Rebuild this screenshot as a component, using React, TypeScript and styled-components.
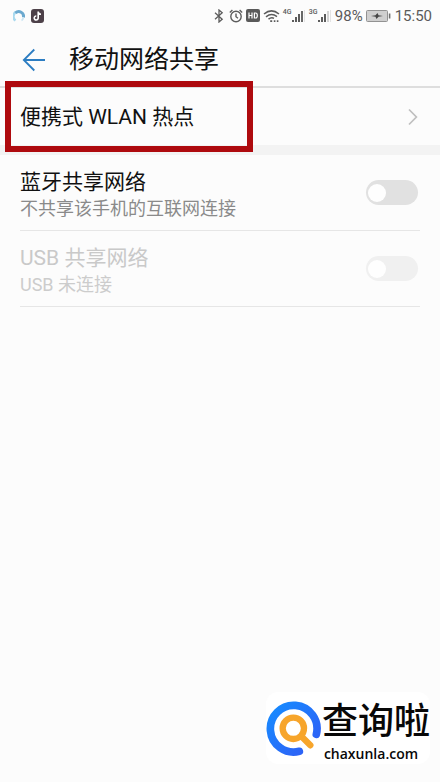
import React from 'react';
import styled, { createGlobalStyle } from 'styled-components';

const GlobalStyle = createGlobalStyle`
  *, *::before, *::after { box-sizing: border-box; }
  body {
    margin: 0;
    background: #fcfcfc;
    color: #111;
    font-family: Roboto, "Noto Sans CJK SC", sans-serif;
  }
`;

const Page = styled.div`
  position: relative;
  display: flex;
  flex-direction: column;
  min-height: 100vh;
`;

const StatusBar = styled.div`
  display: flex;
  align-items: center;
  justify-content: space-between;
  height: 31px;
  padding: 0 8px 0 13px;
  color: #5a5a5a;
  font-size: 15px;
  line-height: 20px;
`;

const StatusGroup = styled.div<{ $gap: number }>`
  display: flex;
  align-items: center;
  gap: ${(p) => p.$gap}px;

  svg { display: block; flex: none; }
`;

const Header = styled.header`
  display: flex;
  align-items: center;
  gap: 24px;
  height: 57px;
  padding: 2px 22px 0;
  border-bottom: 2px solid #dedede;
`;

const BackButton = styled.button`
  display: flex;
  padding: 0;
  border: 0;
  background: none;
  cursor: pointer;
`;

const Title = styled.h1`
  margin: 0;
  font-size: 25px;
  font-weight: 400;
  line-height: 36px;
`;

const EntryRow = styled.a`
  position: relative;
  display: flex;
  align-items: center;
  justify-content: space-between;
  height: 57px;
  padding: 0 22px 0 20px;
  color: inherit;
  text-decoration: none;
`;

const Highlight = styled.span`
  position: absolute;
  top: -7px;
  left: 5px;
  width: 248px;
  height: 71px;
  border: 6px solid #ae0a0e;
  pointer-events: none;
`;

const SectionBand = styled.div`
  height: 10px;
  background: #f3f3f3;
`;

const SettingList = styled.div`
  display: flex;
  flex-direction: column;
  padding: 0 20px;
`;

const SettingRow = styled.label<{ $muted?: boolean }>`
  display: flex;
  align-items: center;
  justify-content: space-between;
  height: 76px;
  padding-right: 2px;
  border-bottom: 1px solid #e6e6e6;
  color: ${(p) => (p.$muted ? '#c9c9c9' : '#111')};
  --sub: ${(p) => (p.$muted ? '#cccccc' : '#8a8a8a')};
`;

const Labels = styled.span`
  display: flex;
  flex-direction: column;
  padding-top: 3px;
`;

const RowTitle = styled.span`
  font-size: 21px;
  line-height: 28px;
`;

const RowSubtitle = styled.span`
  color: var(--sub);
  font-size: 18px;
  line-height: 25px;
`;

const Toggle = styled.input`
  appearance: none;
  display: flex;
  align-items: center;
  flex: none;
  width: 52px;
  height: 25px;
  margin: 0;
  padding: 0 2px;
  border-radius: 13px;
  background: #e1e1e1;

  &::before {
    content: "";
    width: 18px;
    height: 18px;
    border-radius: 50%;
    background: #fefefe;
  }

  &:checked {
    justify-content: flex-end;
    background: #2b7cc4;
  }

  &:disabled { background: #f0f0f0; }
`;

const Watermark = styled.div`
  position: absolute;
  right: 10px;
  bottom: 18px;
  display: flex;
  align-items: center;
  gap: 1px;
  border-radius: 12px;
  background: #fff;
  color: #080808;
`;

const WatermarkText = styled.div`
  display: flex;
  flex-direction: column;
  align-items: center;
`;

const BrandName = styled.span`
  font-family: "Noto Sans CJK SC", sans-serif;
  font-size: 36px;
  font-weight: 500;
  line-height: 52px;
`;

const BrandSite = styled.span`
  padding-right: 10px;
  font-family: "Open Sans", "Noto Sans", sans-serif;
  font-size: 14px;
  font-weight: 600;
  line-height: 20px;
`;

const SwirlIcon = () => (
  <svg width="12" height="14" viewBox="0 0 12 14" fill="none">
    <path d="M2.5 11.5A5 5 0 0 1 3 3" stroke="#a9d9ee" strokeWidth="2.6" />
    <path d="M2.5 4A4.7 4.7 0 0 1 10.4 8.4" stroke="#6ba9cf" strokeWidth="3" />
    <path d="M10.4 8.2Q10 11 8.5 11.5" stroke="#cbe6f3" strokeWidth="1.8" />
  </svg>
);

const NoteIcon = () => (
  <svg width="13" height="14" viewBox="0 0 13 14" fill="none">
    <rect width="13" height="14" rx="3" fill="#4d4149" />
    <path d="M7.2 2.5V9A2 2 0 1 1 5.3 7M7.2 2.8Q7.7 5.2 10 5.3" stroke="#fff" strokeWidth="1.6" />
  </svg>
);

const BluetoothIcon = () => (
  <svg width="12" height="14" viewBox="0 0 12 14" fill="none" stroke="#5c5c5c" strokeWidth="1.3">
    <path d="M1 3.8L8.2 10.2L5 13V1L8.2 3.8L1 10.2" />
  </svg>
);

const AlarmIcon = () => (
  <svg width="14" height="14" viewBox="0 0 14 14" fill="none" stroke="#5c5c5c" strokeWidth="1.4">
    <circle cx="7" cy="7.5" r="5.2" />
    <path d="M7 4.5V7.7L9 9.2M.8 3.4L3.4 1.1M13.2 3.4L10.6 1.1" />
  </svg>
);

const HdIcon = () => (
  <svg width="14" height="13" viewBox="0 0 14 13" fill="none">
    <rect width="14" height="13" rx="2" fill="#5a5a5a" />
    <path d="M3 3.5V9.5M6 3.5V9.5M3 6.5H6M8.4 4H9.6Q11.3 4 11.3 6.5T9.6 9H8.4Z" stroke="#fff" strokeWidth="1.2" />
  </svg>
);

const WifiIcon = () => (
  <svg width="17" height="14" viewBox="0 0 17 14" fill="none" stroke="#5c5c5c" strokeWidth="1.5">
    <path d="M1 5Q8.5 -1.3 16 5M3 7.8Q8.5 3.5 14 7.6M5.5 10.2Q8.5 7.7 11 9.4" />
    <path d="M7.2 12.2H9.2M10.8 12.2H12.4M13.8 12.2H15.4" strokeWidth="1.8" />
  </svg>
);

const Signal = styled.span`
  display: flex;
  align-items: flex-start;
  height: 14px;
`;

const Network = styled.span`
  width: 9px;
  font-size: 7px;
  font-weight: 500;
  line-height: 7px;
`;

const SignalBars = ({ weak }: { weak?: boolean }) => (
  <svg width="14" height="14" viewBox="0 0 14 14">
    <path d="M0 11H2V13H0ZM3 8H5V13H3ZM6 5H8V13H6Z" fill="#5c5c5c" />
    <path d="M9 2H11V13H9Z" fill={weak ? '#d3d3d3' : '#686868'} />
    <path d="M12.2 1H13V13H12.2Z" fill="#ddd" />
  </svg>
);

const BatteryIcon = () => (
  <svg width="26" height="14" viewBox="0 0 26 14" fill="none">
    <rect x=".5" y="1.5" width="21" height="11" rx="1" fill="#cfcfcf" stroke="#929292" />
    <path d="M22.8 4.5H24.4V9.5H22.8Z" fill="#707070" />
    <path d="M5 7L9.5 6.2L11.5 4L12.5 6.2L17 7L12.5 7.8L10.5 10L9.5 7.8Z" fill="#444" />
  </svg>
);

const BackArrow = () => (
  <svg width="23" height="24" viewBox="0 0 23 24" fill="none" stroke="#2c7dc2" strokeWidth="1.8">
    <path d="M12.3 1.5L1.8 12L12.3 22.5M1.8 12H23" />
  </svg>
);

const Chevron = () => (
  <svg width="10" height="18" viewBox="0 0 10 18" fill="none" stroke="#bfbfbf" strokeWidth="1.7">
    <path d="M1 1.5L8.4 9L1 16.5" />
  </svg>
);

const SearchLogo = () => (
  <svg width="55" height="55" viewBox="0 0 165 165" fill="none" strokeLinecap="round">
    <defs>
      <linearGradient id="ring" x1="0" y1="0" x2="1" y2="1">
        <stop offset="0" stopColor="#168cff" />
        <stop offset="1" stopColor="#315cf5" />
      </linearGradient>
    </defs>
    <path d="M151 100A70 70 0 1 0 100 151" stroke="url(#ring)" strokeWidth="23" />
    <circle cx="82" cy="82" r="32" stroke="#f7a52b" strokeWidth="19" />
    <path d="M106 106L133 133" stroke="#f7a52b" strokeWidth="19" />
  </svg>
);

export default function App() {
  return (
    <Page>
      <GlobalStyle />
      <StatusBar>
        <StatusGroup $gap={6}>
          <SwirlIcon />
          <NoteIcon />
        </StatusGroup>
        <StatusGroup $gap={3}>
          <BluetoothIcon />
          <AlarmIcon />
          <HdIcon />
          <WifiIcon />
          <Signal><Network>4G</Network><SignalBars /></Signal>
          <Signal><Network>3G</Network><SignalBars weak /></Signal>
          <span>98%</span>
          <BatteryIcon />
          <span>15:50</span>
        </StatusGroup>
      </StatusBar>

      <Header>
        <BackButton type="button" aria-label="返回"><BackArrow /></BackButton>
        <Title>移动网络共享</Title>
      </Header>

      <main>
        <EntryRow href="#hotspot">
          <RowTitle>便携式 WLAN 热点</RowTitle>
          <Chevron />
          <Highlight />
        </EntryRow>
        <SectionBand />
        <SettingList>
          <SettingRow>
            <Labels>
              <RowTitle>蓝牙共享网络</RowTitle>
              <RowSubtitle>不共享该手机的互联网连接</RowSubtitle>
            </Labels>
            <Toggle type="checkbox" role="switch" />
          </SettingRow>
          <SettingRow $muted>
            <Labels>
              <RowTitle>USB 共享网络</RowTitle>
              <RowSubtitle>USB 未连接</RowSubtitle>
            </Labels>
            <Toggle type="checkbox" role="switch" disabled />
          </SettingRow>
        </SettingList>
      </main>

      <Watermark>
        <SearchLogo />
        <WatermarkText>
          <BrandName>查询啦</BrandName>
          <BrandSite>chaxunla.com</BrandSite>
        </WatermarkText>
      </Watermark>
    </Page>
  );
}
